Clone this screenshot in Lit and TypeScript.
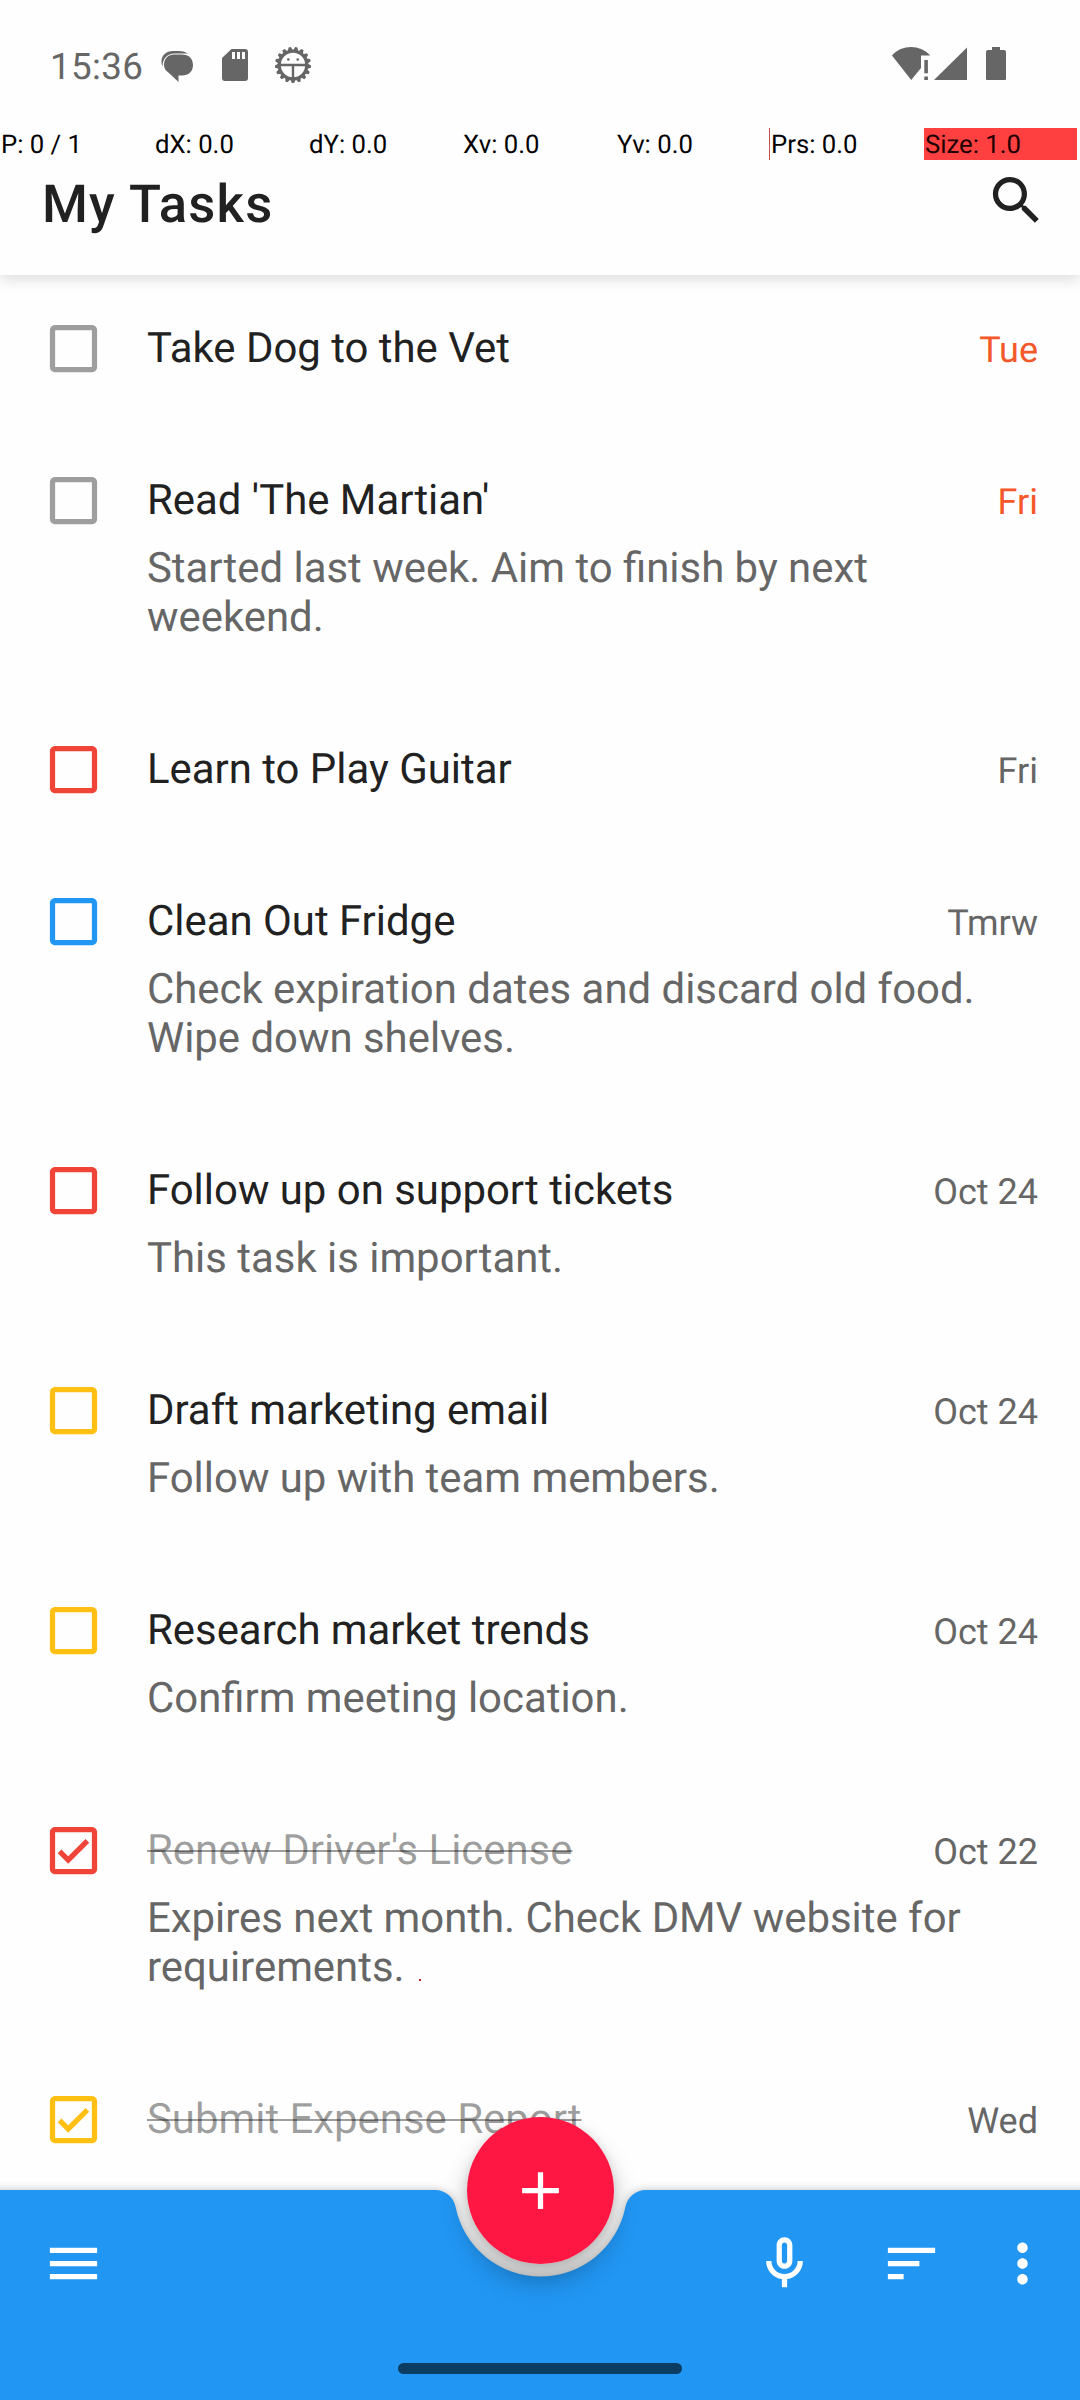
import { LitElement, html, css, svg, nothing } from "lit";
import { customElement, property } from "lit/decorators.js";
import { classMap } from "lit/directives/class-map.js";

type Priority = "none" | "high" | "medium" | "low";

interface Task {
  title: string;
  notes?: string[];
  due: string;
  overdue?: boolean;
  done?: boolean;
  priority: Priority;
}

const TASKS: Task[] = [
  { title: "Take Dog to the Vet", due: "Tue", overdue: true, priority: "none" },
  {
    title: "Read 'The Martian'",
    notes: ["Started last week. Aim to finish by next", "weekend."],
    due: "Fri",
    overdue: true,
    priority: "none",
  },
  { title: "Learn to Play Guitar", due: "Fri", priority: "high" },
  {
    title: "Clean Out Fridge",
    notes: ["Check expiration dates and discard old food.", "Wipe down shelves."],
    due: "Tmrw",
    priority: "low",
  },
  { title: "Follow up on support tickets", notes: ["This task is important."], due: "Oct 24", priority: "high" },
  { title: "Draft marketing email", notes: ["Follow up with team members."], due: "Oct 24", priority: "medium" },
  { title: "Research market trends", notes: ["Confirm meeting location."], due: "Oct 24", priority: "medium" },
  {
    title: "Renew Driver's License",
    notes: ["Expires next month. Check DMV website for", "requirements."],
    due: "Oct 22",
    done: true,
    priority: "high",
  },
  { title: "Submit Expense Report", due: "Wed", done: true, priority: "medium" },
];

const ICONS = {
  search:
    "M15.5 14h-.79l-.28-.27C15.41 12.59 16 11.11 16 9.5 16 5.91 13.09 3 9.5 3S3 5.91 3 9.5 5.91 16 9.5 16c1.61 0 3.09-.59 4.23-1.57l.27.28v.79l5 4.99L20.49 19l-4.99-5zm-6 0C7.01 14 5 11.99 5 9.5S7.01 5 9.5 5 14 7.01 14 9.5 11.99 14 9.5 14z",
  box: "M19 5v14H5V5h14m0-2H5c-1.1 0-2 .9-2 2v14c0 1.1.9 2 2 2h14c1.1 0 2-.9 2-2V5c0-1.1-.9-2-2-2z",
  check: "M17.99 9l-1.41-1.42-6.59 6.59-2.58-2.57-1.42 1.41 4 3.99z",
  menu: "M3 18h18v-2H3v2zm0-5h18v-2H3v2zm0-7v2h18V6H3z",
  mic: "M12 14c1.66 0 3-1.34 3-3V5c0-1.66-1.34-3-3-3S9 3.34 9 5v6c0 1.66 1.34 3 3 3zm-1-9c0-.55.45-1 1-1s1 .45 1 1v6c0 .55-.45 1-1 1s-1-.45-1-1V5zm6 6c0 2.76-2.24 5-5 5s-5-2.24-5-5H5c0 3.53 2.61 6.43 6 6.92V21h2v-3.08c3.39-.49 6-3.39 6-6.92h-2z",
  sort: "M3 18h6v-2H3v2zM3 6v2h18V6H3zm0 7h12v-2H3v2z",
  more: "M12 8c1.1 0 2-.9 2-2s-.9-2-2-2-2 .9-2 2 .9 2 2 2zm0 2c-1.1 0-2 .9-2 2s.9 2 2 2 2-.9 2-2-.9-2-2-2zm0 6c-1.1 0-2 .9-2 2s.9 2 2 2 2-.9 2-2-.9-2-2-2z",
  add: "M19 13h-6v6h-2v-6H5v-2h6V5h2v6h6v2z",
};

const icon = (...paths: string[]) =>
  html`<svg class="icon" width="63" height="63" viewBox="0 0 24 24" fill="currentColor">
    ${paths.map((d) => svg`<path d=${d}></path>`)}
  </svg>`;

@customElement("status-bar")
class StatusBar extends LitElement {
  static styles = css`
    :host {
      display: flex;
      height: 128px;
      box-sizing: border-box;
      padding: 44px 74px 0 50px;
      color: #666;
      justify-content: space-between;
    }
    .group {
      display: flex;
      height: 42px;
      align-items: center;
    }
    .clock {
      font-size: 36.75px;
      line-height: 43px;
      padding-top: 2px;
      width: 110px;
      letter-spacing: 0.35px;
    }
    svg {
      display: block;
    }
    .sd {
      margin-left: 26px;
    }
    .bug {
      margin-left: 25px;
    }
    .signal {
      margin-left: 4px;
    }
    .battery {
      margin-left: 19px;
    }
  `;
  render() {
    const teeth = Array.from({ length: 17 }, (_, i) => 180 + (i * 360) / 17);
    return html`
      <div class="group">
        <span class="clock">15:36</span>
        <svg width="36" height="42" viewBox="160 44 36 42" fill="currentColor">
          <path d="M174 54.500h8c6.500 0 11 4 11 10.500s-4.500 10.500-11 10.500h-3.500v6.500l-9-8.500c-3.500-2.500-5.500-5-5.500-8.500 0-6.500 4.500-10.500 10-10.500z"></path>
          <path d="M188 53.600C185 51.800 182 51 179 51h-6c-7 0-11.500 4.500-11.500 10.500 0 2 .3 3.500 1 4.800.2-8 5-12.900 12-12.900z"></path>
        </svg>
        <svg class="sd" width="26" height="42" viewBox="222 44 26 42" fill="currentColor">
          <path fill-rule="evenodd" d="M231.500 49H245a3 3 0 0 1 3 3v26a3 3 0 0 1-3 3h-20a3 3 0 0 1-3-3V58zM232 52v7h3v-7zm5 0v7h3v-7zm5 0v7h3v-7z"></path>
        </svg>
        <svg class="bug" width="40" height="42" viewBox="273 44 40 42" fill="none" stroke="currentColor">
          <circle cx="293" cy="65" r="13.800" stroke-width="3.200"></circle>
          ${teeth.map(
            (a) => svg`<path d="M290.300 51 L291.800 46.900 H294.200 L295.700 51 Z" fill="currentColor" stroke="none" transform="rotate(${a} 293 65)"></path>`,
          )}
          <path d="M279 65h28M293 65v14" stroke-width="2.400"></path>
          <circle cx="288.300" cy="59.500" r="1.300" fill="currentColor" stroke="none"></circle>
          <circle cx="297.700" cy="59.500" r="1.300" fill="currentColor" stroke="none"></circle>
        </svg>
      </div>
      <div class="group">
        <svg width="38" height="42" viewBox="892 44 38 42" fill="currentColor">
          <path d="M892 55.500C902 44.200 920 44.200 930.300 55.500H921v12.500L911.200 80z"></path>
          <path d="M924.300 60h3.600v13.300h-3.600zM924.300 76.500h3.600v3.600h-3.600z"></path>
        </svg>
        <svg class="signal" width="33" height="42" viewBox="934 44 33 42" fill="currentColor">
          <path d="M967 47.500V80h-33z"></path>
        </svg>
        <svg class="battery" width="20" height="42" viewBox="986 44 20 42" fill="currentColor">
          <path d="M992 47h8v3h4a2 2 0 0 1 2 2v27a1 1 0 0 1-1 1h-18a1 1 0 0 1-1-1V52a2 2 0 0 1 2-2h4z"></path>
        </svg>
      </div>
    `;
  }
}

@customElement("pointer-readout")
class PointerReadout extends LitElement {
  static styles = css`
    :host {
      display: grid;
      grid-template-columns: repeat(7, 153px);
      column-gap: 1px;
      height: 32px;
      font-size: 25.700px;
      line-height: 34px;
      color: #000;
    }
    .cell {
      height: 32px;
      padding-left: 1px;
      white-space: pre;
    }
    .edge {
      box-shadow: inset 1px 0 #c94f4f;
      margin-left: -1px;
      padding-left: 2px;
    }
    .full {
      background: #ff4040;
      color: #200000;
    }
  `;
  render() {
    return html`
      <span class="cell">P: 0 / 1</span>
      <span class="cell">dX: 0.0</span>
      <span class="cell">dY: 0.0</span>
      <span class="cell">Xv: 0.0</span>
      <span class="cell">Yv: 0.0</span>
      <span class="cell edge">Prs: 0.0</span>
      <span class="cell full">Size: 1.0</span>
    `;
  }
}

@customElement("task-row")
class TaskRow extends LitElement {
  @property({ attribute: false }) task!: Task;

  static styles = css`
    :host {
      display: grid;
      grid-template-columns: 63px 1fr auto;
      column-gap: 42px;
      padding: 0 42px 103px;
      font-size: 41.900px;
      line-height: 49px;
    }
    .icon {
      display: block;
      margin: -6px 0 -8px;
    }
    .none {
      color: #9e9e9e;
    }
    .high {
      color: #f04438;
    }
    .medium {
      color: #ffc013;
    }
    .low {
      color: #2196f3;
    }
    .title {
      color: #212121;
      white-space: nowrap;
    }
    .title.done {
      color: rgba(0, 0, 0, 0.38);
      text-decoration: line-through;
      text-decoration-thickness: 2px;
    }
    .notes {
      color: #666;
      margin: 19px 0 0;
      white-space: nowrap;
    }
    .body {
      width: 0;
      padding-top: 1px;
      margin-bottom: -1px;
    }
    .due {
      font-size: 36px;
      color: #666;
      padding-top: 2.500px;
      margin-bottom: -2.500px;
    }
    .overdue {
      color: #f4582a;
    }
  `;
  render() {
    const t = this.task;
    return html`
      <div class=${t.priority}>${t.done ? icon(ICONS.box, ICONS.check) : icon(ICONS.box)}</div>
      <div class="body">
        <span class=${classMap({ title: true, done: !!t.done })}>${t.title}</span>
        ${t.notes ? html`<div class="notes">${t.notes.map((n) => html`<div>${n}</div>`)}</div>` : nothing}
      </div>
      <div class=${classMap({ due: true, overdue: !!t.overdue })}>${t.due}</div>
    `;
  }
}

@customElement("bottom-bar")
class BottomBar extends LitElement {
  static styles = css`
    :host {
      display: flex;
      position: relative;
      height: 210px;
      box-sizing: border-box;
      padding: 41.500px 26px 0 42px;
      color: #fff;
    }
    .surface {
      position: absolute;
      left: 0;
      top: 0;
      overflow: visible;
      filter: drop-shadow(0 0 4px rgba(0, 0, 0, 0.25));
    }
    .fab-shadow {
      position: absolute;
      left: 467px;
      top: -73px;
      width: 147px;
      height: 147px;
      border-radius: 50%;
      box-shadow: 0 16px 26px rgba(0, 0, 0, 0.28), 0 0 8px rgba(0, 0, 0, 0.08);
    }
    .fab {
      position: absolute;
      left: 467px;
      top: -73px;
      width: 147px;
      height: 147px;
      border-radius: 50%;
      background: #ff1744;
      display: grid;
      place-items: center;
    }
    .icon {
      display: block;
      position: relative;
    }
    .actions {
      display: flex;
      margin-left: auto;
    }
    .actions .icon + .icon {
      margin-left: 64px;
    }
    .actions .icon + .icon + .icon {
      margin-left: 48px;
    }
    .handle {
      position: absolute;
      left: 398px;
      top: 173px;
      width: 284px;
      height: 11px;
      border-radius: 5.500px;
      background: #0c3d62;
    }
  `;
  render() {
    return html`
      <svg class="surface" width="1080" height="210" viewBox="0 0 1080 210">
        <path
          fill="#2196f3"
          d="M-20 0H435A21 21 0 0 1 455.600 17A86.600 86.600 0 0 0 625.400 17A21 21 0 0 1 646 0H1100V230H-20Z"
        ></path>
      </svg>
      <div class="fab-shadow"></div>
      ${icon(ICONS.menu)}
      <div class="actions">${icon(ICONS.mic)}${icon(ICONS.sort)}${icon(ICONS.more)}</div>
      <div class="fab">${icon(ICONS.add)}</div>
      <div class="handle"></div>
    `;
  }
}

@customElement("app-root")
class AppRoot extends LitElement {
  static styles = css`
    :host {
      display: flex;
      flex-direction: column;
      position: relative;
      width: 1080px;
      height: 2400px;
      overflow: hidden;
      background: #fefefe;
      font-family: Roboto, "Noto Sans", sans-serif;
      text-rendering: geometricPrecision;
    }
    .header {
      display: flex;
      flex-direction: column;
      height: 275px;
      box-shadow: 0 4px 14px rgba(0, 0, 0, 0.14);
    }
    .toolbar {
      display: flex;
      justify-content: space-between;
      padding: 9px 32px 0 42px;
      color: #212121;
    }
    .heading {
      margin: 4px 0 0;
      font-size: 52.500px;
      line-height: 62px;
      font-weight: 500;
      letter-spacing: 1.200px;
    }
    .list {
      flex: 1;
      min-height: 0;
      padding-top: 48px;
    }
    .touch {
      position: absolute;
      left: 419px;
      top: 1979px;
      width: 2px;
      height: 2px;
      background: #b02030;
    }
  `;
  render() {
    return html`
      <div class="header">
        <status-bar></status-bar>
        <pointer-readout></pointer-readout>
        <div class="toolbar">
          <h1 class="heading">My Tasks</h1>
          ${icon(ICONS.search)}
        </div>
      </div>
      <div class="list">${TASKS.map((t) => html`<task-row .task=${t}></task-row>`)}</div>
      <bottom-bar></bottom-bar>
      <div class="touch"></div>
    `;
  }
}
